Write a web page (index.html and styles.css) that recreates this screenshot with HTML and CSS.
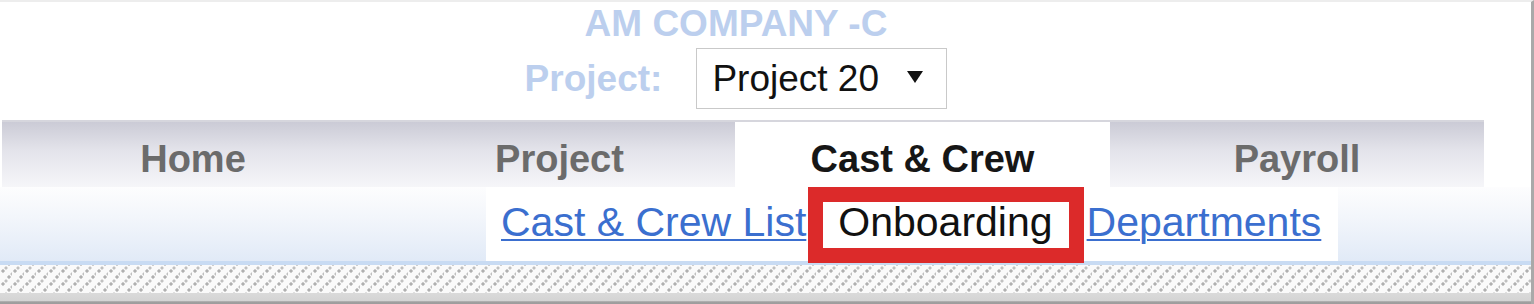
FILE: index.html
```html
<!DOCTYPE html>
<html lang="en">
<head>
<meta charset="utf-8">
<title>Cast &amp; Crew - Onboarding</title>
<link rel="stylesheet" href="styles.css">
</head>
<body>
<div class="window">
  <header class="brand">
    <div class="company">AM COMPANY -C</div>
    <div class="project-row">
      <span class="project-label">Project:</span>
      <div class="select">
        <span class="select-value">Project 20</span>
        <svg class="caret" width="18" height="14" viewBox="0 0 18 14" aria-hidden="true"><path d="M1 1 H17 L9 13 Z" fill="#111"/></svg>
      </div>
    </div>
  </header>
  <nav class="tabs">
    <a class="tab">Home</a>
    <a class="tab">Project</a>
    <a class="tab tab-active">Cast &amp; Crew</a>
    <a class="tab">Payroll</a>
  </nav>
  <div class="subnav">
    <div class="sublinks">
      <a class="sublink">Cast &amp; Crew List</a>
      <span class="highlight">Onboarding</span>
      <a class="sublink sublink-dept">Departments</a>
    </div>
  </div>
  <div class="pattern"></div>
  <div class="shade"></div>
</div>
</body>
</html>
```
FILE: styles.css
```css
html, body {
  margin: 0;
  padding: 0;
  background: #ffffff;
  overflow: hidden;
}

.window {
  width: 1531px;
  height: 302px;
  border-top: 2px solid #ededed;
  border-right: 3px solid #a9a9a9;
  font-family: "Liberation Sans", Arial, sans-serif;
  display: flex;
  flex-direction: column;
}

.brand {
  width: 1472px;
  display: flex;
  flex-direction: column;
  align-items: center;
}

.company {
  font-size: 37px;
  font-weight: bold;
  line-height: 44px;
  color: #bccfee;
}

.project-row {
  display: flex;
  align-items: center;
  gap: 34px;
  margin-top: 2px;
  margin-bottom: 11px;
}

.project-label {
  font-size: 37px;
  font-weight: bold;
  color: #bccfee;
  line-height: 44px;
}

.select {
  box-sizing: border-box;
  width: 251px;
  height: 61px;
  border: 1px solid #c9c9c9;
  display: flex;
  align-items: center;
  padding-left: 15px;
  padding-top: 1px;
}

.select-value {
  font-size: 37px;
  color: #111111;
  line-height: 44px;
}

.caret {
  margin-left: 27px;
  margin-top: -4px;
}

.tabs {
  margin-left: 2px;
  width: 1482px;
  height: 67px;
  box-sizing: border-box;
  border-top: 2px solid #d6d6dd;
  display: grid;
  grid-template-columns: 382px 351px 375px 1fr;
  background: linear-gradient(#cbcbd6, #e4e4eb 45%, #f6f6f9);
}

.tab {
  display: block;
  text-align: center;
  font-size: 38px;
  font-weight: bold;
  line-height: 44px;
  padding-top: 15px;
  color: #6b6b6b;
}

.tab-active {
  background: #ffffff;
  color: #161616;
}

.subnav {
  height: 74px;
  border-bottom: 4px solid #c8dbf3;
  background: linear-gradient(#fdfdfe, #f3f6fb 40%, #e1eaf7);
  display: flex;
  align-items: flex-start;
  padding-left: 486px;
}

.sublinks {
  width: 852px;
  height: 74px;
  box-sizing: border-box;
  background: #ffffff;
  padding-left: 15px;
  display: flex;
  align-items: flex-start;
}

.sublink {
  font-size: 41px;
  line-height: 40px;
  margin-top: 15px;
  color: #3b6fcf;
  text-decoration: underline;
  text-underline-offset: 3px;
  text-decoration-thickness: 2px;
}

.highlight {
  box-sizing: border-box;
  height: 76px;
  margin-left: 2px;
  border: 15px solid #dc2a2a;
  padding: 0 16px 0 15px;
  font-size: 41px;
  line-height: 40px;
  color: #111111;
  background: #ffffff;
  position: relative;
  z-index: 1;
}

.sublink-dept {
  margin-left: 3px;
}

.pattern {
  height: 28px;
  background-color: #fafafa;
  background-image:
    radial-gradient(circle at 3px 5px, #b0b0b0 1.3px, transparent 2px),
    radial-gradient(circle at 6px 2px, #c0c0c0 1.2px, transparent 1.9px),
    radial-gradient(circle at 9px 11px, #b0b0b0 1.3px, transparent 2px),
    radial-gradient(circle at 12px 8px, #c0c0c0 1.2px, transparent 1.9px);
  background-size: 12px 13px;
  background-position: 0 1px;
}

.shade {
  flex: 1;
  background: linear-gradient(#dadada, #d4d4d4 70%, #a0a0a0 80%, #9c9c9c);
}
```
